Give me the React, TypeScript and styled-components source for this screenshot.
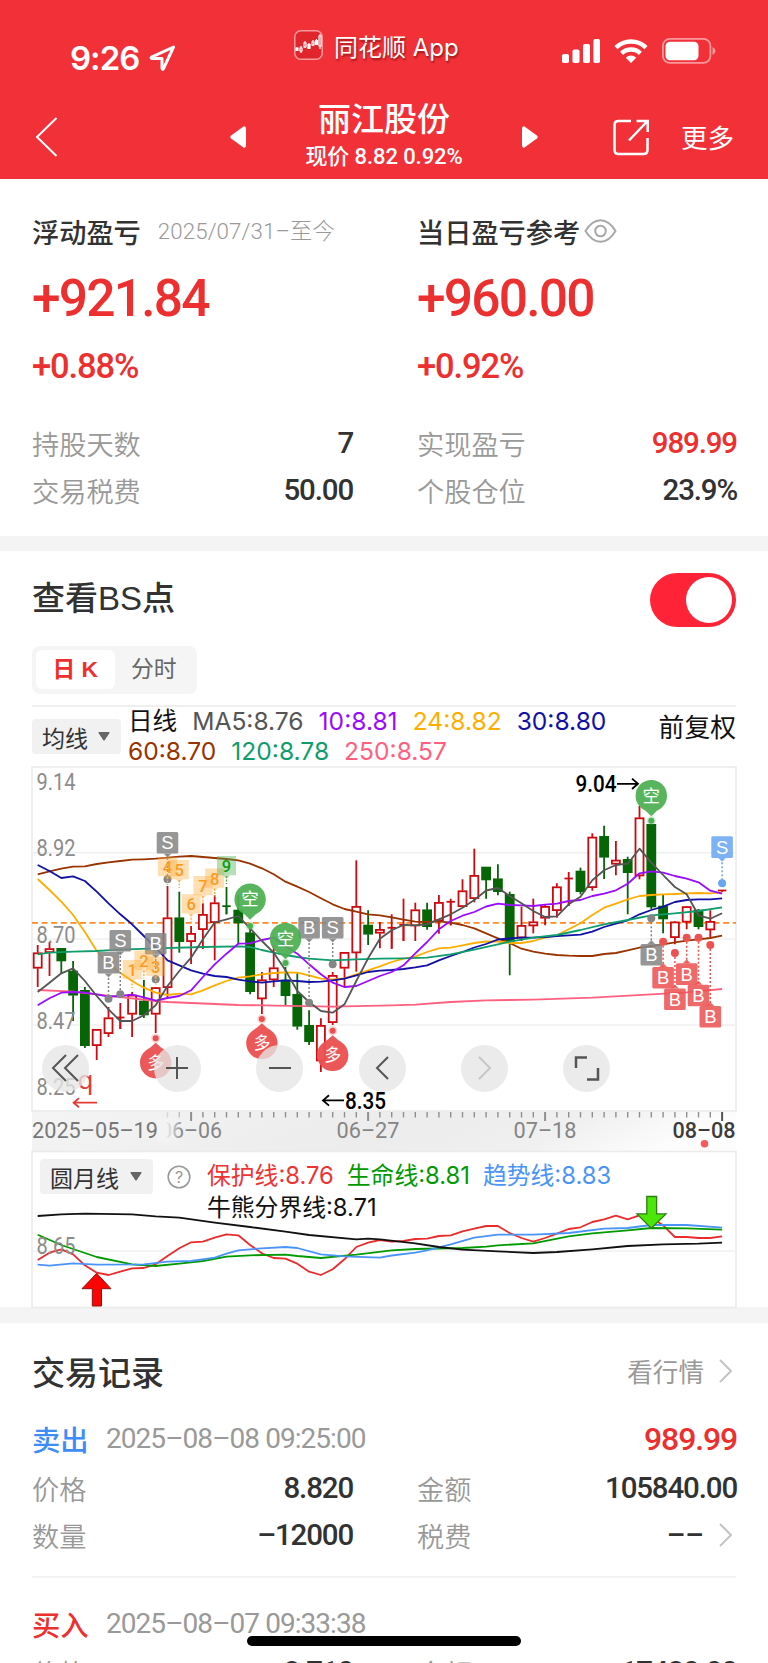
import React from "react";
import styled, { createGlobalStyle } from "styled-components";

const GlobalStyle = createGlobalStyle`
  * { box-sizing: border-box; }
  body { margin: 0; background: #fff; font-family: "Inter", "Noto Sans CJK SC", sans-serif; color: #323232; }
`;

const CJK = `"Noto Sans CJK SC", sans-serif`;
const DIN = `Roboto, "Noto Sans CJK SC", sans-serif`;

/* ---------- page and header ---------- */

const Page = styled.div`
  position: relative;
  width: 768px;
  height: 1663px;
  overflow: hidden;
  background: #fff;
`;

const Header = styled.header`
  height: 179px;
  background: #f23038;
  color: #fff;
`;

const StatusBar = styled.div`
  height: 90px;
  display: grid;
  grid-template-columns: 294px 1fr 206px;
`;

const Clock = styled.div`
  display: flex;
  align-items: center;
  gap: 10px;
  padding: 13px 0 0 70px;
  font: 600 33px "Inter", sans-serif;
  letter-spacing: -1px;
`;

const AppBadge = styled.div`
  display: flex;
  align-items: center;
  gap: 11px;
  height: 90px;
  font: 400 24px "Inter", ${CJK};
  text-shadow: 1px 2px 2px rgba(90, 0, 0, 0.55);
  span { white-space: nowrap; }
`;

const Signals = styled.div`
  display: flex;
  align-items: center;
  gap: 14px;
  height: 102px;
`;

const NavBar = styled.div`
  height: 89px;
  display: flex;
  align-items: center;
  padding: 0 34px 0 35px;
`;

const NavSide = styled.div<{ $w: number }>`
  width: ${(p) => p.$w}px;
  height: 89px;
  padding-top: 5px;
  display: flex;
  align-items: center;
  justify-content: space-between;
`;

const TitleBlock = styled.div`
  width: 276px;
  height: 89px;
  text-align: center;
`;

const StockName = styled.div`
  font: 500 33px/44px ${CJK};
  margin-top: 5px;
`;

const StockPrice = styled.div`
  font: 500 22px/26px ${DIN};
  letter-spacing: -0.1px;
  margin-top: 5px;
`;

const More = styled.span`
  font: 400 26.5px/36px ${CJK};
`;

/* ---------- profit summary ---------- */

const Summary = styled.section`
  height: 357px;
  padding: 33px 32px 0;
  display: grid;
  grid-template-columns: 320px 319px;
  column-gap: 65px;
`;

const SummaryTitle = styled.div`
  height: 38px;
  display: flex;
  align-items: center;
  font: 500 27.2px/38px ${CJK};
`;

const Since = styled.span`
  margin-left: 17px;
  font: 400 22.3px/38px "Roboto", ${CJK};
  font-weight: 300;
  color: #999;
  letter-spacing: 0.1px;
`;

const BigGain = styled.div`
  margin-top: 19px;
  font: 500 51.5px/60px ${DIN};
  letter-spacing: -1.8px;
  color: #ec2f2f;
`;

const GainRate = styled.div`
  margin: 17px 0 34px;
  font: 500 34.5px/40px ${DIN};
  letter-spacing: -1.1px;
  color: #ec2f2f;
`;

const Row = styled.div<{ $h?: number }>`
  height: ${(p) => p.$h ?? 46.5}px;
  display: flex;
  align-items: center;
  justify-content: space-between;
`;

const Label = styled.span`
  font: 400 27.2px/40px ${CJK};
  font-weight: 350;
  color: #999;
`;

const Value = styled.span<{ $red?: boolean; $size?: number }>`
  font: 500 ${(p) => p.$size ?? 29.5}px/40px ${DIN};
  letter-spacing: -1.15px;
  margin-right: -1px;
  color: ${(p) => (p.$red ? "#ec2f2f" : "#323232")};
`;

const Band = styled.div<{ $h: number }>`
  height: ${(p) => p.$h}px;
  background: #f4f4f4;
`;

/* ---------- chart section ---------- */

const ChartSection = styled.section`
  height: 756px;
  padding: 0 32px;
`;

const ToggleRow = styled.div`
  height: 95px;
  display: flex;
  align-items: center;
  justify-content: space-between;
  font: 500 33px/44px "Inter", ${CJK};
  h2 { font: 500 33px/44px "Liberation Sans", ${CJK}; margin: 0; }
`;

const Switch = styled.div`
  width: 86px;
  height: 54px;
  margin-top: 2px;
  padding: 4px;
  border-radius: 27px;
  background: #ff2337;
  display: flex;
  justify-content: flex-end;
`;

const Knob = styled.div`
  width: 46px;
  height: 46px;
  border-radius: 50%;
  background: #fff;
`;

const Tabs = styled.div`
  width: 165px;
  height: 48px;
  padding: 4px;
  display: flex;
  border-radius: 8px;
  background: #f5f5f5;
`;

const Tab = styled.div<{ $active?: boolean }>`
  width: 78.5px;
  height: 39px;
  border-radius: 6px;
  text-align: center;
  font: ${(p) => (p.$active ? 700 : 400)} 22.8px/38px "Liberation Sans", ${CJK};
  color: ${(p) => (p.$active ? "#ec2f2f" : "#666")};
  background: ${(p) => (p.$active ? "#fff" : "transparent")};
`;

const Legend = styled.div`
  height: 62px;
  margin-top: 11px;
  border-top: 2px solid #efefef;
  display: flex;
`;

const Picker = styled.div<{ $w: number }>`
  width: ${(p) => p.$w}px;
  height: 35px;
  flex: none;
  display: flex;
  align-items: center;
  justify-content: space-between;
  padding: 0 11px 0 10px;
  border-radius: 4px;
  background: #f1f1f1;
  font: 400 23px/34px ${CJK};
  color: #333;
`;

const LegendLines = styled.div`
  margin-left: 7px;
  width: 530px;
  font: 400 24.6px/29px "Inter", ${CJK};
`;

const LegendLine = styled.div<{ $gap: number }>`
  display: flex;
  gap: ${(p) => p.$gap}px;
  height: 29.5px;
  white-space: nowrap;
`;

const Tint = styled.span<{ $c: string; $ls?: number }>`
  color: ${(p) => p.$c};
  letter-spacing: ${(p) => p.$ls ?? 0}px;
`;

const Restore = styled.div`
  flex: 1;
  text-align: right;
  font: 400 25.8px/38px ${CJK};
  color: #111;
  white-space: nowrap;
`;

const ChartBox = styled.div<{ $h: number }>`
  position: relative;
  height: ${(p) => p.$h}px;
  > svg { display: block; }
`;

const RoundButton = styled.button<{ $x: number }>`
  position: absolute;
  left: ${(p) => p.$x - 23.5}px;
  top: 277.5px;
  width: 47px;
  height: 47px;
  padding: 0;
  border: 0;
  border-radius: 50%;
  background: rgba(230, 230, 230, 0.78);
  display: grid;
  place-items: center;
`;

const IndicatorHead = styled.div`
  position: absolute;
  left: 8px;
  top: 8px;
  display: flex;
  align-items: flex-start;
`;

const Help = styled.svg`
  margin: 6px 16px 0 14px;
  flex: none;
`;

const IndicatorLines = styled.div`
  font: 400 23.8px/32px "Inter", ${CJK};
  padding-top: 1px;
`;

/* ---------- trade records ---------- */

const Records = styled.section`
  padding: 22px 32px 0;
`;

const RecordsHead = styled(Row)`
  height: 52px;
  h2 { margin: 0; font: 500 33px/48px ${CJK}; }
`;

const LinkText = styled.span`
  display: flex;
  align-items: center;
  gap: 15px;
  padding-right: 4px;
  font: 400 25.6px/40px ${CJK};
  color: #999;
`;

const DashValue = styled(LinkText)`
  font: 500 29px/40px ${DIN};
  color: #323232;
`;

const Trade = styled.div<{ $line?: boolean }>`
  padding-top: ${(p) => (p.$line ? 16 : 21)}px;
  ${(p) => p.$line && "height: 181px; border-bottom: 2px solid #f3f3f3;"}
`;

const Side = styled.span<{ $c: string }>`
  width: 74px;
  font: 500 28.3px/42px ${CJK};
  color: ${(p) => p.$c};
`;

const When = styled.span`
  flex: 1;
  font: 400 28px/42px ${DIN};
  letter-spacing: -0.95px;
  color: #999;
`;

const Pair = styled.div`
  display: grid;
  grid-template-columns: 320px 319px;
  column-gap: 65px;
`;

const HomeBar = styled.div`
  position: absolute;
  left: 247px;
  top: 1636px;
  width: 274px;
  height: 10px;
  border-radius: 5px;
  background: #000;
`;

/* ---------- chart data ---------- */

const xAt = (i: number) => 37.7 + 11.8 * i;

type Candle = ["r" | "g", number, number, number, number];

/* direction, high, body top, body bottom, low */
const candles: Candle[] = [
  ["r", 944, 951.7, 967.3, 986], ["r", 941, 947.5, 951.7, 975], ["g", 947, 947.3, 960, 973],
  ["g", 960, 970, 994.3, 1020], ["g", 986, 989.3, 1044.7, 1047], ["r", 1028, 1028.3, 1044.7, 1059],
  ["r", 1006, 1016.7, 1032.7, 1036], ["r", 1002, 1016.5, 1017.5, 1028], ["r", 991, 994, 1013.3, 1036],
  ["g", 979, 1000, 1014, 1017], ["r", 986, 986.5, 1013.3, 1032], ["r", 885, 916.7, 986.7, 997],
  ["g", 890.7, 916.7, 940.7, 951.7], ["r", 925, 932.3, 940.7, 963], ["r", 901.7, 913.3, 928.7, 948],
  ["r", 894.3, 901.7, 921.7, 959.3], ["g", 886, 905.2, 906.2, 913.3], ["g", 894.3, 909, 922, 943.3],
  ["g", 926, 931.7, 990.7, 993.3], ["r", 971, 978.7, 998, 1013], ["r", 944, 966.7, 979, 986],
  ["g", 966, 979, 994.7, 1004], ["g", 972.3, 993.3, 1025.3, 1028.7], ["g", 1009.3, 1024.3, 1040.7, 1044],
  ["r", 1017.3, 1024.3, 1060, 1071], ["r", 971, 974.3, 1021.7, 1024], ["r", 951, 951.3, 967.3, 986.7],
  ["r", 859.3, 905.3, 952, 970.7], ["g", 909.3, 924, 933.3, 944], ["r", 921, 928.3, 932.3, 947.3],
  ["r", 913.3, 926.8, 927.8, 947.7], ["r", 897.7, 923.8, 924.8, 940], ["r", 901.7, 908.7, 925, 940],
  ["g", 901.7, 908.7, 925.7, 928.7], ["r", 894, 901.3, 920, 932.7], ["r", 897.7, 900.8, 901.8, 924.3],
  ["r", 878.3, 889.7, 905.7, 906], ["r", 847.7, 874.3, 897.7, 901.3], ["g", 866, 866, 879, 897.7],
  ["g", 863.3, 877.7, 890.7, 894.3], ["g", 890.7, 893.3, 941, 974.3], ["r", 905.7, 924.3, 937, 940],
  ["r", 897.7, 920.7, 925, 932.3], ["r", 903.7, 905.3, 917.3, 924.3], ["r", 882.3, 885.7, 909.7, 916.7],
  ["r", 871, 877.5, 878.5, 905], ["g", 866.7, 870, 890.7, 893.3], ["r", 832.3, 836, 886.7, 889.7],
  ["g", 824.7, 835.3, 856.3, 878], ["r", 840, 859, 863.3, 874.3], ["g", 855.7, 858.3, 871.7, 913.3],
  ["r", 805, 816.7, 875, 878.3], ["g", 823.3, 823.3, 906, 908], ["g", 893.3, 905, 918, 932.3],
  ["r", 920, 920.8, 936.7, 943.3], ["r", 905, 905.5, 921.3, 928.3], ["g", 908, 909, 925.7, 928.3],
  ["r", 909.3, 920.3, 929, 936.7], ["r", 889, 889.5, 890.5, 891],
];

type Pt = [number, number];
const seq = (ys: number[]): Pt[] => ys.map((y, i) => [i, y]);

const averages: { c: string; p: Pt[] }[] = [
  { c: "#ff6080", p: [[0, 989], [3, 990.7], [5, 993.3], [10, 1000], [11, 1001], [17, 1004], [19, 1004.3], [25, 1005.7], [30, 1004.3], [32, 1003.7], [35, 1001], [38, 999.3], [42, 998.7], [47, 996.7], [52, 993.3], [55, 991.3], [58, 988]] },
  { c: "#993300", p: seq([873.3, 870.3, 867.7, 865.7, 865.3, 863, 861.3, 860, 858.7, 858.3, 857.7, 856.7, 855.7, 855, 856, 857, 858, 859.3, 862.7, 867.3, 873.3, 880.7, 885.7, 891, 897.3, 903.3, 908, 910.7, 913.3, 914.3, 916.3, 918.7, 920.7, 921, 920.3, 921.7, 924, 927.3, 932.3, 937.3, 942, 947.7, 950.7, 952.7, 954, 954.7, 955, 955, 953, 952, 949.3, 946.7, 945, 943.3, 941.3, 939.7, 938.3, 937, 934.7]) },
  { c: "#ffae00", p: seq([878, 889, 900.7, 914, 931, 950, 962.3, 971.7, 980, 986.7, 991.7, 994, 992.7, 993.3, 989.3, 984.3, 980, 976.7, 975.3, 973.3, 972, 971.3, 971.7, 974.3, 977.7, 978.3, 977.3, 973.3, 969.3, 965.3, 961, 957.7, 955.7, 951, 947.3, 946.7, 944.3, 942, 940.5, 940.5, 942, 942, 940, 936.7, 934.3, 928.3, 922.3, 914, 906.7, 902.7, 898.3, 895, 894, 893.3, 893, 892.3, 892, 892.3, 891.3]) },
  { c: "#1111a5", p: seq([864, 870, 877, 875.3, 880, 890.7, 902.3, 913.3, 923.3, 935, 946.7, 959.3, 964.3, 969.3, 972.7, 975, 976, 978.7, 980.3, 981.7, 980.3, 979.3, 980, 981, 980.7, 979.3, 977.7, 974.3, 971, 969.7, 969, 968, 966.3, 964.3, 959.3, 955, 951, 946.5, 943, 938.5, 937.5, 936.7, 936.7, 936, 935, 934.3, 933.7, 930.7, 926, 922.7, 919.3, 913.3, 909, 905.7, 901, 899, 898.3, 898.3, 897.3]) },
  { c: "#0f9d6c", p: [[0, 953.3], [1, 951.7], [3, 950.7], [5, 950], [7, 948.7], [10, 947.3], [14, 946], [17, 945.3], [18, 946], [19, 949], [20, 951.7], [21, 954], [22, 956], [23, 957.7], [25, 959.3], [27, 958.3], [29, 957.7], [31, 957.3], [33, 956.7], [35, 953.3], [37, 948.7], [39, 943.3], [40, 940.7], [42, 936.7], [44, 934], [46, 929], [48, 923.3], [50, 919], [52, 914.3], [54, 912.3], [56, 910], [58, 906.3]] },
  { c: "#9a0bff", p: seq([1004.3, 997.3, 991.7, 991, 991.7, 993.3, 995.7, 995, 993.7, 996.3, 999.7, 997, 995, 989.3, 976, 963.3, 952.7, 942.7, 942.3, 939, 936.7, 945, 952.7, 963.3, 973.3, 981.7, 986, 985, 980, 975, 971, 964.3, 952.3, 941, 928.3, 920, 914.7, 911, 905.5, 902.7, 904, 904.3, 905, 903.7, 902.7, 900, 899, 895, 892.7, 889.3, 882.7, 872.3, 870.3, 871.7, 875, 877.7, 881.3, 889.7, 892.7]) },
  { c: "#555555", p: seq([991, 981.7, 972.3, 967.3, 980, 995, 1008.3, 1020, 1020, 1014.3, 1004.3, 985, 970, 956.7, 938.3, 921.5, 918.3, 915, 927.3, 940, 951.7, 969.3, 990, 1001, 1010, 1011.7, 1003.3, 980, 957.3, 937.7, 929.3, 924, 924.3, 923.3, 918.3, 913.3, 906.7, 899, 889.5, 887, 895, 902.3, 910, 916, 915.3, 903.3, 895.7, 879.3, 869.3, 864, 862.7, 847.7, 861.7, 874, 886, 893.3, 914.3, 917.7, 912.3]) },
];

const indicator: { c: string; p: Pt[] }[] = [
  { c: "#e82c2c", p: seq([1259, 1251.7, 1248.3, 1253.3, 1264.3, 1271.7, 1274, 1270.7, 1267.3, 1267, 1263.3, 1255, 1247.3, 1241.3, 1240.7, 1236.7, 1233.3, 1234.3, 1244, 1252.3, 1257, 1257.7, 1262.7, 1270.7, 1274, 1268.3, 1258.3, 1246, 1241.7, 1239, 1240.7, 1240, 1238, 1237.7, 1235, 1234.3, 1230.3, 1227.7, 1225, 1225, 1232, 1237, 1240.7, 1237, 1232.7, 1228, 1226.3, 1221, 1218.3, 1214.7, 1218.3, 1214.3, 1216.7, 1224.3, 1236, 1236, 1237, 1237, 1235.3]) },
  { c: "#009a00", p: [[0, 1233.7], [2, 1244], [5, 1256], [8, 1263.3], [10, 1265], [12, 1262.7], [14, 1260], [16, 1255.7], [18, 1254.3], [21, 1253.7], [22, 1255], [24, 1257], [27, 1253.7], [30, 1249.3], [32, 1248], [34, 1247.5], [36, 1247], [38, 1245.7], [39, 1244.3], [42, 1242.3], [45, 1235.3], [47, 1232.3], [50, 1229.3], [52, 1227], [55, 1227.3], [58, 1228.7]] },
  { c: "#4a94f8", p: [[0, 1263.7], [1, 1264.7], [3, 1262.3], [5, 1263.7], [9, 1263.3], [11, 1260.7], [13, 1260], [15, 1256.7], [16, 1252.7], [17, 1249.3], [19, 1247.3], [21, 1246], [22, 1247], [24, 1253.3], [26, 1255.3], [29, 1256.7], [30, 1254.5], [32, 1251.7], [33, 1249.3], [35, 1243.3], [37, 1236.7], [39, 1233.7], [42, 1233.7], [45, 1232], [48, 1227.7], [50, 1227], [52, 1224], [55, 1224], [58, 1226.7]] },
  { c: "#111111", p: [[0, 1215], [2, 1213.3], [4, 1212.7], [8, 1213.3], [10, 1215.3], [12, 1216.7], [15, 1221.7], [18, 1226], [21, 1230.7], [23, 1234], [27, 1238.3], [28, 1237.7], [29, 1238.3], [32, 1242.3], [34, 1246], [36, 1248.7], [39, 1250.3], [42, 1252], [44, 1251], [47, 1248.3], [50, 1245], [53, 1243.3], [56, 1242.7], [58, 1241.7]] },
];

const toPoints = (p: Pt[]) => p.map(([i, y]) => `${xAt(i).toFixed(1)},${y}`).join(" ");

const countTags: [string, number, number, boolean?][] = [
  ["1", 8, 959], ["2", 9, 949.5], ["3", 10, 955.5], ["4", 11, 856], ["5", 12, 859],
  ["6", 13, 893.3], ["7", 14, 875], ["8", 15, 867.5], ["9", 16, 855, true],
];

/* letter, index, box top, dot y, colour */
const tradeTags: [string, number, number, number, string][] = [
  ["B", 6, 951, 997.7, "#858585"], ["S", 7, 929, 993.3, "#858585"], ["B", 10, 932, 978.3, "#858585"],
  ["S", 11, 831, 878.3, "#858585"], ["B", 23, 916, 1001.7, "#858585"], ["S", 25, 916, 963.3, "#858585"],
  ["B", 52, 943, 917.3, "#858585"], ["S", 58, 835.3, 882.3, "#68a6f2"],
  ["B", 53, 966, 940.7, "#eb5252"], ["B", 54, 987.5, 952, "#eb5252"], ["B", 55, 962.3, 936.7, "#eb5252"],
  ["B", 56, 983.7, 936.7, "#eb5252"], ["B", 57, 1005, 944, "#eb5252"],
];

const longPins: [number, number, number][] = [[10, 1061.7, 1037.3], [19, 1042.3, 1018], [25, 1054.3, 1029.7]];
const shortPins: [number, number, number][] = [[18, 898.3, 925], [21, 937.7, 962], [52, 794.7, 819.7]];

const CandleShape = ({ i, d }: { i: number; d: Candle }) => {
  const [k, hi, top, bot, lo] = d;
  const x = xAt(i);
  const c = k === "r" ? "#cc0a0f" : "#066606";
  const thin = bot - top < 2;
  return (
    <g stroke={c} strokeWidth={1.8}>
      <line x1={x} x2={x} y1={hi} y2={thin ? lo : top} />
      <line x1={x} x2={x} y1={bot} y2={lo} />
      {thin ? (
        <line x1={x - 4.2} x2={x + 4.2} y1={top} y2={top} />
      ) : (
        <rect x={x - 4} y={top + 0.6} width={8} height={Math.max(bot - top - 1.2, 1.5)} fill={k === "r" ? "#fff" : c} />
      )}
    </g>
  );
};

const TradeTag = ({ t, i, top, dot, c }: { t: string; i: number; top: number; dot: number; c: string }) => {
  const x = xAt(i);
  const below = dot < top;
  return (
    <g>
      <line x1={x} x2={x} y1={below ? dot : top + 22} y2={below ? top : dot} stroke={c} strokeWidth={1.5} strokeDasharray="2 2" />
      <circle cx={x} cy={dot} r={4} fill={c} />
      <path d={below ? `M${x - 4} ${top}l4-4 4 4z` : `M${x - 4} ${top + 21.5}l4 4 4-4z`} fill={c} opacity={0.85} />
      <rect x={x - 10.8} y={top} width={21.6} height={21.6} rx={1.5} fill={c} opacity={0.86} />
      <text x={x} y={top + 17.3} fontSize={18.5} fill="#fff" textAnchor="middle" fontFamily="Liberation Sans">{t}</text>
    </g>
  );
};

const AxisLabel = ({ x, y, children, w = 39 }: { x: number; y: number; children: string; w?: number }) => (
  <text x={x} y={y} fontSize={23} fill="#8c8c8c" fontFamily="Roboto" textLength={w} lengthAdjust="spacingAndGlyphs">{children}</text>
);

const PriceChart = () => (
  <svg width={704} height={384} viewBox="32 766 704 384" overflow="visible">
    <defs>
      <linearGradient id="strip" x1="0" x2="1" y1="0" y2="0.12">
        <stop offset="0" stopColor="#f4f4f4" />
        <stop offset="0.55" stopColor="#ececec" />
        <stop offset="0.8" stopColor="#f0f0f0" />
        <stop offset="1" stopColor="#fdfdfd" />
      </linearGradient>
      <linearGradient id="fade" x1="0" x2="1">
        <stop offset="0" stopColor="#f3f3f3" />
        <stop offset="0.3" stopColor="#f3f3f3" />
        <stop offset="1" stopColor="#f3f3f3" stopOpacity="0" />
      </linearGradient>
    </defs>
    <rect x={32} y={1110} width={704} height={40} fill="url(#strip)" />
    <rect x={32} y={766} width={704} height={344} fill="#fff" stroke="#ebebeb" strokeWidth={1.6} />
    {[851.7, 938, 1024].map((y) => <line key={y} x1={32} x2={736} y1={y} y2={y} stroke="#f0f0f0" strokeWidth={1.6} />)}
    <line x1={32} x2={736} y1={921.8} y2={921.8} stroke="#ff8827" strokeWidth={1.8} strokeDasharray="6 3.6" />
    {candles.map((d, i) => <CandleShape key={i} i={i} d={d} />)}
    {averages.map((l) => (
      <polyline key={l.c} points={toPoints(l.p)} fill="none" stroke={l.c} strokeWidth={1.8} strokeLinejoin="round" />
    ))}
    <AxisLabel x={36.5} y={789}>9.14</AxisLabel>
    <AxisLabel x={36.5} y={855}>8.92</AxisLabel>
    <AxisLabel x={36.5} y={941.5}>8.70</AxisLabel>
    <AxisLabel x={36.5} y={1027.5}>8.47</AxisLabel>
    <AxisLabel x={36.5} y={1094}>8.25</AxisLabel>
    {tradeTags.map(([t, i, top, dot, c]) => <TradeTag key={i} t={t} i={i} top={top} dot={dot} c={c} />)}
    {countTags.map(([n, i, top, green]) => {
      const x = xAt(i);
      const c = green ? "#49b04c" : "#ffac3c";
      return (
        <g key={n}>
          <line x1={x} x2={x} y1={top + 20} y2={top + 28} stroke={c} strokeWidth={1.4} strokeDasharray="2 1.5" />
          <path d={`M${x - 9.5} ${top}h19v19.3h-6l-3.5 3.5-3.5-3.5h-6z`} fill={c} opacity={0.4} />
          <text x={x} y={top + 16} fontSize={16.5} fontWeight={500} textAnchor="middle" fontFamily="Roboto" fill={green ? "#0d9c12" : "#ff9a1f"}>{n}</text>
        </g>
      );
    })}
    {shortPins.map(([i, cy, dot]) => {
      const x = xAt(i);
      return (
        <g key={i}>
          <circle cx={x} cy={dot} r={4.6} fill="#4caf50" opacity={0.25} />
          <circle cx={x} cy={dot} r={3} fill="#4caf50" />
          <g opacity={0.92}>
            <path d={`M${x - 15.7} ${cy}a15.7 15.7 0 1 1 31.4 0c0 7-4 12-10 15l-5.7 5.5-5.7-5.5c-6-3-10-8-10-15z`} fill="#4caf50" />
            <text x={x} y={cy + 6} fontSize={17.5} fill="#fff" textAnchor="middle" fontFamily="Noto Sans CJK SC">空</text>
          </g>
        </g>
      );
    })}
    {longPins.map(([i, cy, dot]) => {
      const x = xAt(i);
      return (
        <g key={i}>
          <circle cx={x} cy={dot} r={4.6} fill="#eb5050" opacity={0.25} />
          <circle cx={x} cy={dot} r={3} fill="#eb5050" />
          <g opacity={0.95}>
            <path d={`M${x - 15.7} ${cy}a15.7 15.7 0 1 0 31.4 0c0-7-4-12-10-15l-5.7-5-5.7 5c-6 3-10 8-10 15z`} fill="#eb5050" />
            <text x={x} y={cy + 6} fontSize={17} fill="#fff" textAnchor="middle" fontFamily="Noto Sans CJK SC">多</text>
          </g>
        </g>
      );
    })}
    <g fill="#000" fontFamily="Roboto" fontSize={23} fontWeight={500}>
      <text x={575.5} y={791} textLength={41} lengthAdjust="spacingAndGlyphs">9.04</text>
      <text x={345} y={1107.5} textLength={41} lengthAdjust="spacingAndGlyphs">8.35</text>
    </g>
    <path d="M617 782.8h21m-6-5.2 6 5.2-6 5.2M344 1099.4h-21m6-5.2-6 5.2 6 5.2" fill="none" stroke="#000" strokeWidth={1.8} />
    <text x={77.5} y={1087.5} fontSize={26} fill="#e53935" fontFamily="Noto Sans">q</text>
    <path d="M97 1101.7H74m5-4.6-5.4 4.6 5.4 4.6" fill="none" stroke="#e53935" strokeWidth={1.8} />
    {Array.from({ length: 48 }, (_, k) => k + 11).map((i) => {
      const major = [13, 28, 43, 58].includes(i);
      return (
        <line key={i} x1={xAt(i)} x2={xAt(i)} y1={1111} y2={major ? 1120 : 1116.5} stroke={i === 58 ? "#555" : "#8f8f8f"}
          strokeWidth={major ? 2 : 1.4} opacity={i === 11 ? 0.25 : i === 12 ? 0.5 : 1} />
      );
    })}
    <g fontFamily="Roboto" fontSize={22.5} fill="#858585">
      <text x={160} y={1136.8} textLength={62} lengthAdjust="spacingAndGlyphs">06–06</text>
      <rect x={158} y={1118} width={25} height={24} fill="url(#fade)" />
      <text x={32} y={1136.8} textLength={126} lengthAdjust="spacingAndGlyphs" fill="#777">2025–05–19</text>
      <text x={336.5} y={1136.8} textLength={63} lengthAdjust="spacingAndGlyphs">06–27</text>
      <text x={513.5} y={1136.8} textLength={63} lengthAdjust="spacingAndGlyphs">07–18</text>
      <text x={672.5} y={1136.8} textLength={63} lengthAdjust="spacingAndGlyphs" fill="#3c3c3c" fontWeight={500}>08–08</text>
    </g>
    <circle cx={704.5} cy={1142.8} r={3.8} fill="#f45b5b" />
  </svg>
);

const IndicatorChart = () => (
  <svg width={704} height={157} viewBox="32 1150 704 157" overflow="visible">
    <rect x={32} y={1150.5} width={704} height={156} fill="#fff" stroke="#ebebeb" strokeWidth={1.6} />
    <line x1={32} x2={736} y1={1250} y2={1250} stroke="#f0f0f0" strokeWidth={1.6} />
    {indicator.map((l) => (
      <polyline key={l.c} points={toPoints(l.p)} fill="none" stroke={l.c} strokeWidth={1.8} strokeLinejoin="round" />
    ))}
    <AxisLabel x={36.5} y={1252.7}>8.65</AxisLabel>
    <path d="M96.7 1272.3 111 1287.7h-9.5V1305h-9.2v-17.3H82z" fill="#fb0404" stroke="#8d1212" strokeWidth={1} />
    <path d="M651.3 1227.3 666 1212.9h-9.4V1195.5h-9.8v17.4H637z" fill="#4be60a" stroke="#2f7f10" strokeWidth={1.3} />
  </svg>
);

const Caret = () => <svg width={12} height={9} viewBox="0 0 12 9"><path d="M1 0h10q1 0 .5 1L6.8 8q-.8 1-1.6 0L.5 1Q0 0 1 0z" fill="#666" /></svg>;
const Chevron = () => <svg width={13} height={24} viewBox="0 0 13 24"><path d="M1 1l11 11L1 23" fill="none" stroke="#c4c4c4" strokeWidth={2} /></svg>;

const icons = {
  first: "M15 1 2 14l13 13M27 1 14 14l13 13",
  plus: "M3 14h22M14 3v22",
  minus: "M3 14h22",
  prev: "M20 3 9 14l11 11",
  next: "M9 3l11 11L9 25",
  expand: "M3 14V3.5h11M14 25.5h11V14",
};

const ChartButton = ({ x, d, c = "#555", w = 2 }: { x: number; d: string; c?: string; w?: number }) => (
  <RoundButton $x={x}>
    <svg width={28} height={28} viewBox="0 0 28 28"><path d={d} fill="none" stroke={c} strokeWidth={w} /></svg>
  </RoundButton>
);

const Field = ({ label, value, red }: { label: string; value: string; red?: boolean }) => (
  <Row><Label>{label}</Label><Value $red={red}>{value}</Value></Row>
);

export default function App() {
  return (
    <Page>
      <GlobalStyle />
      <Header>
        <StatusBar>
          <Clock>
            9:26
            <svg width={27} height={26} viewBox="0 0 27 26"><path d="M24.5 2 2.5 12.2q-1 1 .5 1.3h10v10q.4 1.6 1.4.4z" fill="none" stroke="#fff" strokeWidth={3} strokeLinejoin="round" /></svg>
          </Clock>
          <AppBadge>
            <svg width={29} height={30} viewBox="0 0 29 30">
              <rect x={0.8} y={0.8} width={27.4} height={28.4} rx={6} fill="#e0262c" stroke="#f59a9c" strokeWidth={1.5} />
              <g stroke="#fff" strokeWidth={1.2}>
                <path d="M3 17v4M7 16v7M11 11v7M15 13v6M19 10v6M22.500 9v6M26 4v15" />
                <path d="M2 18h2v2.500H2zM14 14.500h2v4h-2zM21.500 10.500h2v4h-2z" fill="#fff" />
                <path d="M6 18h2v3H6zM10 13h2v4h-2zM18 12h2v3h-2zM25 6h2v10h-2z" fill="#e0262c" />
              </g>
            </svg>
            <span>同花顺 App</span>
          </AppBadge>
          <Signals>
            <svg width={38} height={24} viewBox="0 0 38 24" fill="#fff">
              <rect y={15} width={7} height={9} rx={1.8} /><rect x={10.500} y={10.500} width={7} height={13.500} rx={1.8} />
              <rect x={21} y={5} width={7} height={19} rx={1.8} /><rect x={31.400} y={0} width={6.600} height={24} rx={1.8} />
            </svg>
            <svg width={34} height={24} viewBox="0 0 34 24" fill="none" stroke="#fff" strokeWidth={4.4}>
              <path d="M2 8.600a21.500 21.500 0 0 1 30 0M7.600 14.400a13.400 13.400 0 0 1 18.800 0" />
              <path d="M17 24l-5.200-5.300a7.500 7.500 0 0 1 10.400 0z" fill="#fff" stroke="none" />
            </svg>
            <svg width={54} height={26} viewBox="0 0 54 26">
              <rect x={0.9} y={0.9} width={47.500} height={24} rx={7} fill="none" stroke="#fff" strokeOpacity={0.5} strokeWidth={1.8} />
              <rect x={3.500} y={3.700} width={33} height={18.600} rx={4.500} fill="#fff" />
              <path d="M50.500 9q3 1.500 3 4t-3 4z" fill="#fff" opacity={0.5} />
            </svg>
          </Signals>
        </StatusBar>
        <NavBar>
          <NavSide $w={211}>
            <svg width={24} height={40} viewBox="0 0 24 40"><path d="M21.500 1 2 20l19.500 19" fill="none" stroke="#fff" strokeWidth={2} /></svg>
            <svg width={16} height={22} viewBox="0 0 16 22"><path d="M13.500.5Q16-.5 16 3v16q0 3.500-2.500 2.500L.8 12.200q-1-1.200 0-2.400z" fill="#fff" /></svg>
          </NavSide>
          <TitleBlock>
            <StockName>丽江股份</StockName>
            <StockPrice>现价 8.82 0.92%</StockPrice>
          </TitleBlock>
          <NavSide $w={212}>
            <svg width={16} height={22} viewBox="0 0 16 22"><path d="M2.500.5Q0-.5 0 3v16q0 3.500 2.500 2.500l12.700-9.300q1-1.200 0-2.400z" fill="#fff" /></svg>
            <svg width={37} height={37} viewBox="0 0 37 37" fill="none" stroke="#fff" strokeWidth={2.500} style={{ marginLeft: 43 }}>
              <path d="M18 2H5.500Q1.500 2 1.500 6v25q0 4 4 4h25q4 0 4-4V19M16 21.500 34.500 2M23.500 2h11.200v11" />
            </svg>
            <More>更多</More>
          </NavSide>
        </NavBar>
      </Header>

      <Summary>
        <div>
          <SummaryTitle>浮动盈亏<Since>2025/07/31–至今</Since></SummaryTitle>
          <BigGain>+921.84</BigGain>
          <GainRate>+0.88%</GainRate>
          <Field label="持股天数" value="7" />
          <Field label="交易税费" value="50.00" />
        </div>
        <div>
          <SummaryTitle>
            当日盈亏参考
            <svg width={33} height={24} viewBox="0 0 33 24" fill="none" stroke="#a8a8a8" strokeWidth={2} style={{ marginLeft: 4 }}>
              <path d="M1.500 12Q8 1.200 16.500 1.200T31.500 12Q25 22.800 16.500 22.800T1.500 12z" /><circle cx={16.500} cy={12} r={5.300} />
            </svg>
          </SummaryTitle>
          <BigGain>+960.00</BigGain>
          <GainRate>+0.92%</GainRate>
          <Field label="实现盈亏" value="989.99" red />
          <Field label="个股仓位" value="23.9%" />
        </div>
      </Summary>
      <Band $h={15} />

      <ChartSection>
        <ToggleRow><h2>查看BS点</h2><Switch><Knob /></Switch></ToggleRow>
        <Tabs><Tab $active>日 K</Tab><Tab>分时</Tab></Tabs>
        <Legend>
          <Picker $w={89} style={{ marginTop: 12 }}>均线<Caret /></Picker>
          <LegendLines>
            <LegendLine $gap={15}>
              <Tint $c="#111">日线</Tint><Tint $c="#555">MA5:8.76</Tint><Tint $c="#9a0bff">10:8.81</Tint>
              <Tint $c="#ffae00">24:8.82</Tint><Tint $c="#1111a5">30:8.80</Tint>
            </LegendLine>
            <LegendLine $gap={15}>
              <Tint $c="#993300">60:8.70</Tint><Tint $c="#0f9d6c">120:8.78</Tint><Tint $c="#ff6080">250:8.57</Tint>
            </LegendLine>
          </LegendLines>
          <Restore>前复权</Restore>
        </Legend>
        <ChartBox $h={384}>
          <PriceChart />
          <ChartButton x={33} d={icons.first} />
          <ChartButton x={145.300} d={icons.plus} />
          <ChartButton x={247.700} d={icons.minus} />
          <ChartButton x={350} d={icons.prev} />
          <ChartButton x={452.400} d={icons.next} c="#c6c6c6" />
          <ChartButton x={554.700} d={icons.expand} w={2.500} />
        </ChartBox>
        <ChartBox $h={157}>
          <IndicatorChart />
          <IndicatorHead>
            <Picker $w={113}>圆月线<Caret /></Picker>
            <Help width={24} height={24} viewBox="0 0 24 24">
              <circle cx={12} cy={12} r={10.800} fill="none" stroke="#999" strokeWidth={1.600} />
              <text x={12} y={17.500} fontSize={16} fill="#999" textAnchor="middle" fontFamily="Inter">?</text>
            </Help>
            <IndicatorLines>
              <LegendLine $gap={13} style={{ height: 32 }}>
                <Tint $c="#ee3333">保护线:8.76</Tint><Tint $c="#009a00">生命线:8.81</Tint><Tint $c="#4a94f8">趋势线:8.83</Tint>
              </LegendLine>
              <Tint $c="#111">牛熊分界线:8.71</Tint>
            </IndicatorLines>
          </IndicatorHead>
        </ChartBox>
      </ChartSection>
      <Band $h={16} />

      <Records>
        <RecordsHead><h2>交易记录</h2><LinkText>看行情<Chevron /></LinkText></RecordsHead>
        <Trade $line>
          <Row $h={52}><Side $c="#3d8df5">卖出</Side><When>2025–08–08 09:25:00</When><Value $red $size={32}>989.99</Value></Row>
          <Pair>
            <Field label="价格" value="8.820" />
            <Field label="金额" value="105840.00" />
            <Field label="数量" value="–12000" />
            <Row><Label>税费</Label><DashValue>––<Chevron /></DashValue></Row>
          </Pair>
        </Trade>
        <Trade>
          <Row $h={50}><Side $c="#ec2f2f">买入</Side><When>2025–08–07 09:33:38</When></Row>
          <Pair>
            <Field label="价格" value="8.710" />
            <Field label="金额" value="17420.00" />
          </Pair>
        </Trade>
      </Records>
      <HomeBar />
    </Page>
  );
}
